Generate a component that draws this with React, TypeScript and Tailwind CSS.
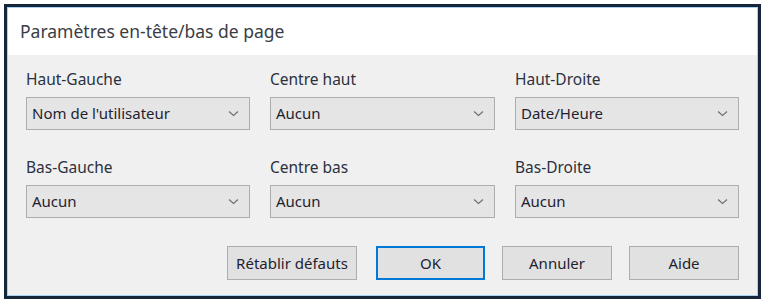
import React from 'react';

const font = { fontFamily: '"Noto Sans", "Open Sans", sans-serif' };

function Chevron() {
  return (
    <svg width="11" height="7" viewBox="0 0 11 7" className="shrink-0">
      <path d="M1 1.5 L5.5 5.5 L10 1.5" fill="none" stroke="#707070" strokeWidth="1.2" />
    </svg>
  );
}

function Field({ label, value }: { label: string; value: string }) {
  return (
    <div className="flex flex-col">
      <div className="h-[20px] leading-[20px] text-[15.5px] text-[#2b3140]">{label}</div>
      <div className="mt-[8px] h-[33px] flex items-center justify-between bg-[#e5e5e5] border border-[#adadad] pl-[5px] pr-[10px]">
        <span className="text-[15px] text-[#1f2330]">{value}</span>
        <Chevron />
      </div>
    </div>
  );
}

function Btn({ children, w, primary }: { children: React.ReactNode; w: string; primary?: boolean }) {
  return (
    <div
      className={`${w} h-[34px] flex items-center justify-center bg-[#e1e1e1] text-[15px] text-[#1f2330] ${
        primary ? 'border-2 border-[#0078d7]' : 'border border-[#adadad]'
      }`}
    >
      {children}
    </div>
  );
}

export default function App() {
  return (
    <div className="w-[762px] h-[301px] bg-white pt-[4px] pl-[4px]" style={font}>
      <div className="w-[757px] h-[295px] border-[3px] border-[#15263a]">
        <div className="w-full h-full border border-[#a8d0f0] flex flex-col">
          <div className="h-[47px] bg-white pl-[12px] flex items-center text-[17.5px] text-[#3a3d45]">
            Paramètres en-tête/bas de page
          </div>
          <div className="flex-1 bg-[#f0f0f0] pl-[18px] pt-[14px]">
            <div className="grid grid-cols-[224px_225px_224px] gap-x-[20px]">
              <Field label="Haut-Gauche" value="Nom de l'utilisateur" />
              <Field label="Centre haut" value="Aucun" />
              <Field label="Haut-Droite" value="Date/Heure" />
            </div>
            <div className="grid grid-cols-[224px_225px_224px] gap-x-[20px] mt-[27px]">
              <Field label="Bas-Gauche" value="Aucun" />
              <Field label="Centre bas" value="Aucun" />
              <Field label="Bas-Droite" value="Aucun" />
            </div>
            <div className="flex mt-[28px] pl-[201px]">
              <Btn w="w-[130px]">Rétablir défauts</Btn>
              <div className="w-[19px]" />
              <Btn w="w-[109px]" primary>OK</Btn>
              <div className="w-[17px]" />
              <Btn w="w-[110px]">Annuler</Btn>
              <div className="w-[17px]" />
              <Btn w="w-[110px]">Aide</Btn>
            </div>
          </div>
        </div>
      </div>
    </div>
  );
}
